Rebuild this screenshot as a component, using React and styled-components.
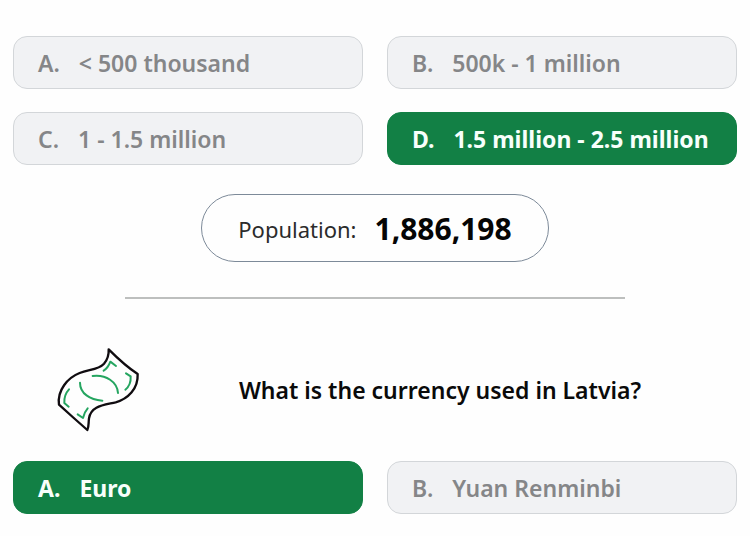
import React from "react";
import styled, { createGlobalStyle } from "styled-components";

const GlobalStyle = createGlobalStyle`
  *, *::before, *::after { box-sizing: border-box; }
  body {
    margin: 0;
    background: #fefefe;
    color: #0a0a0a;
    font-family: "Noto Sans", "Open Sans", sans-serif;
  }
`;

const Page = styled.main`
  padding: 36px 13px 23px;
`;

const AnswerGrid = styled.div`
  display: grid;
  grid-template-columns: repeat(2, minmax(0, 1fr));
  gap: 23px 24px;
`;

const AnswerButton = styled.button`
  display: flex;
  align-items: center;
  gap: 19px;
  min-height: 53px;
  padding: 0 0 0 24px;
  border: 1px solid ${(p) => (p.$correct ? "#128045" : "#d3d6d9")};
  border-radius: 14px;
  background: ${(p) => (p.$correct ? "#128045" : "#f1f2f4")};
  color: ${(p) => (p.$correct ? "#f8fffb" : "#858688")};
  font-family: inherit;
  font-size: 23px;
  font-weight: ${(p) => (p.$correct ? 700 : 600)};
  line-height: 32px;
  text-align: left;
  white-space: nowrap;
  cursor: pointer;
`;

const Fact = styled.p`
  display: flex;
  align-items: center;
  gap: 18px;
  width: fit-content;
  min-height: 68px;
  margin: 29px auto 0;
  padding: 2px 36px 0;
  border: 1px solid #7d8a99;
  border-radius: 34px;
  font-size: 22px;
  line-height: 40px;
  color: #2b2b2b;
`;

const FactValue = styled.strong`
  font-size: 30px;
  font-weight: 700;
  color: #050505;
`;

const Divider = styled.hr`
  width: 69%;
  height: 2px;
  margin: 35px auto 0;
  border: 0;
  background: #bdbfbe;
`;

const QuestionRow = styled.header`
  display: grid;
  grid-template-columns: 170px 1fr;
  align-items: center;
  margin: 48px 0 28px;
  padding-right: 40px;
`;

const BanknoteIcon = styled.svg`
  display: block;
  width: 86px;
  height: 86px;
  margin: 0 auto;
  fill: none;
  stroke-width: 6;
  stroke-linecap: round;
  stroke-linejoin: round;
`;

const Question = styled.h2`
  margin: 0;
  font-size: 23px;
  font-weight: 600;
  line-height: 32px;
  text-align: center;
`;

function Banknote() {
  return (
    <BanknoteIcon viewBox="46 34 258 258" aria-hidden="true">
      <path
        stroke="#100c10"
        strokeWidth="7"
        d="M207 41C232 66 262 94 294 115C296 160 264 190 228 200C190 209 154 211 148 248C146 263 148 273 143 283L99 244L58 207C52 164 84 126 120 112C150 101 177 102 193 84C204 71 208 57 207 41Z"
      />
      <g stroke="#25a560">
        <path d="M159 121C199 116 233 139 235 172" />
        <path d="M121 141C121 174 151 192 188 195" />
        <path d="M192 105C202 99 208 89 212 78L229 91" />
        <path d="M259 113L273 122C274 138 268 153 257 162" />
        <path d="M88 161C77 173 73 187 74 202L87 213" />
        <path d="M114 236L130 247C132 236 137 226 144 218" />
      </g>
    </BanknoteIcon>
  );
}

const populationAnswers = [
  { letter: "A.", text: "< 500 thousand" },
  { letter: "B.", text: "500k - 1 million" },
  { letter: "C.", text: "1 - 1.5 million" },
  { letter: "D.", text: "1.5 million - 2.5 million", correct: true },
];

const currencyAnswers = [
  { letter: "A.", text: "Euro", correct: true },
  { letter: "B.", text: "Yuan Renminbi" },
];

function Answers({ items }) {
  return (
    <AnswerGrid>
      {items.map((item) => (
        <AnswerButton key={item.letter} type="button" $correct={item.correct}>
          <span>{item.letter}</span>
          <span>{item.text}</span>
        </AnswerButton>
      ))}
    </AnswerGrid>
  );
}

export default function App() {
  return (
    <>
      <GlobalStyle />
      <Page>
        <Answers items={populationAnswers} />
        <Fact>
          <span>Population:</span>
          <FactValue>1,886,198</FactValue>
        </Fact>
        <Divider />
        <QuestionRow>
          <Banknote />
          <Question>What is the currency used in Latvia?</Question>
        </QuestionRow>
        <Answers items={currencyAnswers} />
      </Page>
    </>
  );
}
